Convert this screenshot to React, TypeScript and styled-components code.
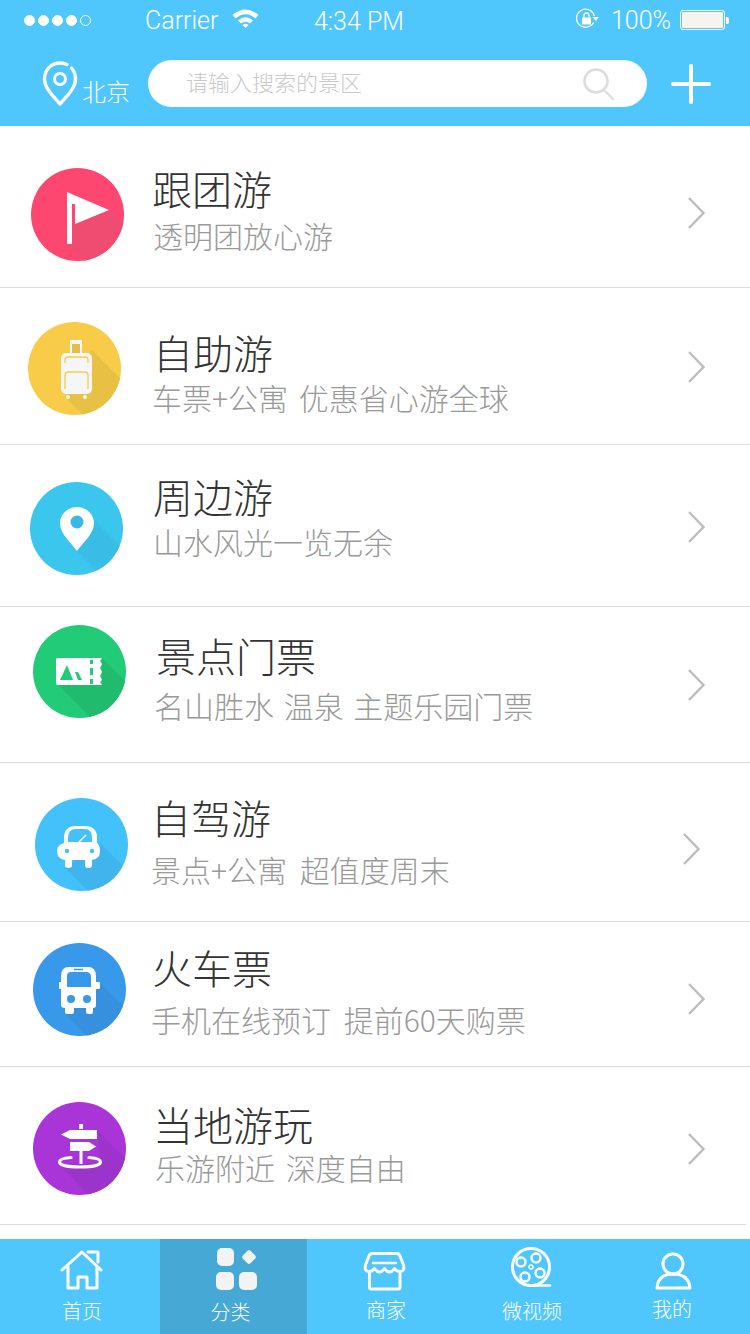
import React from 'react';
import styled, { createGlobalStyle } from 'styled-components';

const SKY = '#4fc7fd';
const FONT = '"Noto Sans CJK SC", "Liberation Sans", sans-serif';

const GlobalStyle = createGlobalStyle`
  html, body {
    margin: 0;
    padding: 0;
    background: #fff;
  }
  * {
    box-sizing: border-box;
  }
`;

const Page = styled.div`
  width: 750px;
  height: 1334px;
  overflow: hidden;
  display: flex;
  flex-direction: column;
  background: #fff;
  font-family: ${FONT};
`;

const Top = styled.header`
  height: 126px;
  flex: none;
  background: ${SKY};
  color: #fff;
`;

const StatusBar = styled.div`
  height: 40px;
  display: flex;
  align-items: center;
  padding-left: 24px;
  font-family: Roboto, 'Liberation Sans', sans-serif;
  font-weight: 300;
  font-size: 25px;
  color: #fff;
`;

const Dots = styled.div`
  display: flex;
  gap: 3px;
`;

const Dot = styled.span<{ $empty?: boolean }>`
  width: 11px;
  height: 11px;
  border-radius: 50%;
  border: 1px solid #fff;
  background: ${(p) => (p.$empty ? 'transparent' : '#fff')};
`;

const Carrier = styled.span`
  margin-left: 54px;
  width: 72px;
  white-space: nowrap;
`;

const Wifi = styled.svg`
  margin-left: 15px;
  margin-bottom: 4px;
`;

const Clock = styled.span`
  margin-left: 55px;
  margin-top: 3px;
  width: 90px;
  white-space: nowrap;
`;

const RotationLock = styled.svg`
  margin-left: 172px;
  margin-bottom: 2px;
`;

const Percent = styled.span`
  margin-left: 12px;
  width: 60px;
  white-space: nowrap;
`;

const Battery = styled.div`
  margin-left: 9px;
  width: 45px;
  height: 20px;
  border: 1px solid #fff;
  border-radius: 3px;
  padding: 1px;
  &::before {
    content: '';
    display: block;
    height: 100%;
    background: #f6f4ef;
    border-radius: 1px;
  }
`;

const BatteryCap = styled.div`
  width: 3px;
  height: 7px;
  margin-left: 1px;
  background: #fff;
  border-radius: 0 2px 2px 0;
`;

const SearchRow = styled.div`
  display: flex;
  align-items: flex-start;
  padding: 20px 0 0 41px;
`;

const City = styled.div`
  display: flex;
  align-items: flex-end;
  width: 107px;
  height: 47px;
  font-size: 24px;
  font-weight: 300;
  line-height: 28px;
  padding-bottom: 2px;
`;

const PinIcon = styled.svg`
  flex: none;
  margin-bottom: -2px;
`;

const SearchBox = styled.div`
  width: 499px;
  height: 47px;
  border-radius: 24px;
  background: #fff;
  display: flex;
  align-items: center;
  justify-content: space-between;
  padding: 0 32px 5px 38px;
  color: #c9c9c9;
  font-size: 22px;
  font-weight: 300;
`;

const SearchGlass = styled.svg`
  margin-top: 5px;
`;

const AddIcon = styled.svg`
  margin: 4px 0 0 24px;
`;

const List = styled.ul`
  list-style: none;
  margin: 0;
  padding: 0;
  flex: 1;
`;

const Row = styled.li<{ $height: number; $short?: boolean }>`
  height: ${(p) => p.$height}px;
  display: flex;
  align-items: flex-start;
  position: relative;
  border-bottom: 1px solid #dcdcdc;
  ${(p) => (p.$short ? 'width: 746px;' : '')}
`;

const Badge = styled.svg<{ $x: number; $y: number }>`
  flex: none;
  margin: ${(p) => p.$y}px 0 0 ${(p) => p.$x}px;
`;

const Copy = styled.div<{ $x: number; $y: number }>`
  position: absolute;
  left: ${(p) => p.$x}px;
  top: ${(p) => p.$y}px;
`;

const Title = styled.div`
  font-size: 40px;
  line-height: 46px;
  font-weight: 300;
  color: #333;
  white-space: nowrap;
`;

const Sub = styled.div<{ $gap: number; $x: number; $words: number }>`
  margin: ${(p) => p.$gap}px 0 0 ${(p) => p.$x}px;
  font-size: 30px;
  line-height: 40px;
  font-weight: 300;
  color: #999;
  white-space: nowrap;
  word-spacing: ${(p) => p.$words}px;
`;

const Chevron = styled.svg<{ $x: number; $y: number }>`
  position: absolute;
  left: ${(p) => p.$x}px;
  top: ${(p) => p.$y}px;
`;

const TabBar = styled.nav`
  height: 95px;
  flex: none;
  background: ${SKY};
  display: grid;
  grid-template-columns: 160px 147px 156px 138px 149px;
  color: #fff;
`;

const Tab = styled.div<{ $active?: boolean; $shift: number }>`
  display: flex;
  flex-direction: column;
  align-items: center;
  padding-top: 8px;
  background: ${(p) => (p.$active ? '#45a8d5' : 'transparent')};
  padding-left: ${(p) => Math.max(p.$shift, 0)}px;
  padding-right: ${(p) => Math.max(-p.$shift, 0)}px;
`;

const TabIcon = styled.svg`
  display: block;
  fill: none;
  stroke: #fff;
  stroke-width: 3;
  stroke-linecap: round;
  stroke-linejoin: round;
  overflow: visible;
`;

const TabLabel = styled.span<{ $top: number }>`
  margin-top: ${(p) => p.$top}px;
  font-size: 20px;
  line-height: 24px;
  font-weight: 300;
  white-space: nowrap;
`;

const WHITE = '#fff';

function CircleIcon({ id, x, y, base, shade, shadow, children }: {
  id: string;
  x: number;
  y: number;
  base: string;
  shade: string;
  shadow: string;
  children: React.ReactNode;
}) {
  return (
    <Badge $x={x} $y={y} width="93" height="93" viewBox="0 0 93 93">
      <clipPath id={id}>
        <circle cx="46.5" cy="46.5" r="46.5" />
      </clipPath>
      <circle cx="46.5" cy="46.5" r="46.5" fill={base} />
      <polygon points={shadow} fill={shade} clipPath={`url(#${id})`} />
      {children}
    </Badge>
  );
}

const rows = [
  {
    id: 'flag', title: '跟团游', sub: '透明团放心游', height: 162,
    ix: 31, iy: 42, tx: 152, ty: 42, gap: 4, sx: 1, words: 0, cx: 687, cy: 70,
    base: '#fd4770', shade: '#f04c71', shadow: '36,76 41,76 44,56 78,42 110,74 110,110 70,110',
    art: <path d="M36 24 L78 42 L44 56 V36 H41 V76 H36 Z" fill={WHITE} />,
  },
  {
    id: 'bag', title: '自助游', sub: '车票+公寓 优惠省心游全球', height: 157,
    ix: 28, iy: 34, tx: 153, ty: 44, gap: 2, sx: -1, words: 4, cx: 687, cy: 62,
    base: '#f8cb48', shade: '#e8c144', shadow: '64,28 100,64 100,110 72,110 38,76',
    art: (
      <g>
        <path d="M42 18 H54 V32 H52 V22 H44 V32 H42 Z" fill="#f5f6fa" />
        <rect x="44" y="22" width="8" height="9" fill="#e6bf42" />
        <rect x="33" y="31" width="31" height="41" rx="5" fill="#f5f6fa" />
        <path d="M37 41 V38 Q37 35 40 35 H57 Q60 35 60 38 V41" fill="none" stroke="#f8cb48" strokeWidth="1.3" />
        <path d="M37 67 V53 Q37 50 40 50 H57 Q60 50 60 53 V67" fill="none" stroke="#f8cb48" strokeWidth="1.3" />
        <circle cx="40" cy="75" r="2" fill="#f5f6fa" />
        <circle cx="57" cy="75" r="2" fill="#f5f6fa" />
      </g>
    ),
  },
  {
    id: 'pin', title: '周边游', sub: '山水风光一览无余', height: 162,
    ix: 30, iy: 37, tx: 153, ty: 31, gap: 2, sx: 0, words: 0, cx: 687, cy: 65,
    base: '#3bc6ee', shade: '#39bce5', shadow: '64,38 100,74 100,110 88,110 47,69',
    art: (
      <g>
        <path d="M47 69 C40 59 30 52 30 41 C30 32 38 25 47 25 C56 25 64 32 64 41 C64 52 54 59 47 69 Z" fill={WHITE} />
        <circle cx="47" cy="40" r="6.5" fill="#3bb9e4" />
      </g>
    ),
  },
  {
    id: 'ticket', title: '景点门票', sub: '名山胜水 温泉 主题乐园门票', height: 156,
    ix: 33, iy: 18, tx: 156, ty: 28, gap: 7, sx: -2, words: 3, cx: 687, cy: 61,
    base: '#22cc76', shade: '#20bb6d', shadow: '69,33 100,64 100,110 75,110 25,60 69,60',
    art: (
      <g>
        <path d="M25 33 H69 L67 36 L69 39 L67 43 L69 47 L67 51 L69 55 L67 57 L69 60 H25 Q23 60 23 58 V35 Q23 33 25 33 Z" fill={WHITE} />
        <path d="M27 55 L34 40 L40 55 Z M42 47 H45 L49 55 H45 Z" fill="#22cc76" />
        <path d="M58.5 35 V39 M58.5 43 V50 M58.5 54 V59" stroke="#22cc76" strokeWidth="3" />
      </g>
    ),
  },
  {
    id: 'car', title: '自驾游', sub: '景点+公寓 超值度周末', height: 159,
    ix: 35, iy: 35, tx: 151, ty: 34, gap: 9, sx: 0, words: 6, cx: 682, cy: 69,
    base: '#43c1fb', shade: '#41b4ee', shadow: '65,45 100,80 100,110 70,110 30,70',
    art: (
      <g>
        <path d="M29 45 V40 Q29 28 41 28 H50 Q62 28 62 40 V45 Q65 47 65 53 Q65 61 57 62 V67 Q57 70 54 70 H53 Q50 70 50 67 V62 H37 V67 Q37 70 34 70 H33 Q30 70 30 67 V62 Q22 61 22 53 Q22 47 29 45 Z" fill={WHITE} />
        <path d="M33 44 V40 Q33 31 41 31 H50 Q57 31 57 40 V44 Z" fill="#43c1fb" />
        <path d="M44 44 L51 37" stroke={WHITE} strokeWidth="1.5" />
        <circle cx="32" cy="53" r="2.2" fill="#43c1fb" />
        <circle cx="57" cy="53" r="2.2" fill="#43c1fb" />
      </g>
    ),
  },
  {
    id: 'bus', title: '火车票', sub: '手机在线预订 提前60天购票', height: 145,
    ix: 33, iy: 21, tx: 152, ty: 25, gap: 9, sx: -1, words: 6, cx: 687, cy: 60,
    base: '#3899ea', shade: '#3690dd', shadow: '66,39 100,73 100,110 71,110 32,71',
    art: (
      <g>
        <path d="M36 24 H55 Q63 24 63 33 V39 H66 Q67 39 67 40 V45 Q67 46 66 46 H63 V62 Q63 65 60 65 V69 Q60 71 58 71 H55 Q53 71 53 69 V65 H41 V69 Q41 71 39 71 H34 Q32 71 32 69 V65 Q28 65 28 62 V46 H27 Q26 46 26 45 V40 Q26 39 27 39 H28 V33 Q28 24 36 24 Z" fill={WHITE} />
        <path d="M38 29 H53 Q58 29 58 34 V44 H34 V33 Q34 29 38 29 Z" fill="#3899ea" />
        <path d="M41 26.5 H50" stroke="#3899ea" strokeWidth="1.5" />
        <circle cx="38" cy="56" r="4" fill="#3899ea" />
        <circle cx="54" cy="56" r="4" fill="#3899ea" />
      </g>
    ),
  },
  {
    id: 'sign', title: '当地游玩', sub: '乐游附近 深度自由', height: 158,
    ix: 33, iy: 35, tx: 153, ty: 37, gap: 0, sx: 2, words: 4, cx: 687, cy: 65,
    base: '#a934d8', shade: '#9c33ca', shadow: '64,28 100,64 100,110 72,110 28,64 67,60',
    short: true,
    art: (
      <g>
        <rect x="46" y="22" width="4" height="5" fill={WHITE} />
        <polygon points="28,32.5 37,28 64,28 64,37 37,37" fill={WHITE} />
        <polygon points="37,40 56,40 63,44.5 56,49 37,49" fill={WHITE} />
        <rect x="46.5" y="49" width="3" height="13" fill={WHITE} />
        <path d="M38 55.5 C30 56 26.5 57.5 26.5 60 C26.5 63.5 36 65 47 65 C58 65 67.5 63.5 67.5 60 C67.5 57.5 64 56 56 55.5" fill="none" stroke={WHITE} strokeWidth="3.2" strokeLinecap="round" />
      </g>
    ),
  },
];

const tabs = [
  {
    label: '首页', top: 8, shift: 4,
    icon: (
      <>
        <path d="M10 23 L30 5 L49 23" />
        <path d="M36 5 H46 V15" />
        <path d="M16 20 V41 H26 V30 H35 V41 H45 V20" />
      </>
    ),
  },
  {
    label: '分类', top: 9, shift: -6, active: true,
    icon: (
      <g fill="#f3f3f3" stroke="none">
        <rect x="16" y="1" width="17" height="18" rx="5" />
        <rect x="42.5" y="4.5" width="11" height="11" rx="2.5" transform="rotate(45 48 10)" />
        <rect x="15" y="25" width="18" height="18" rx="5" />
        <rect x="38" y="25" width="18" height="18" rx="5" />
      </g>
    ),
  },
  {
    label: '商家', top: 7, shift: 2,
    icon: (
      <>
        <path d="M16 6.5 H41 Q43 6.5 44 9 L47.5 18 Q49 24.5 44 24.5 Q40.5 24.5 38.5 21.5 Q36 25 33.5 25 Q31 25 28.5 21.5 Q26 25 23.5 25 Q21 25 18.5 21.5 Q16.5 24.5 13 24.5 Q8 24.5 9.5 18 L13 9 Q14 6.5 16 6.5 Z" />
        <path d="M13.5 27 V40 Q13.5 42 15.5 42 H42 Q44 42 44 40 V27" />
        <path d="M17 16 H40" strokeWidth="2.5" />
      </>
    ),
  },
  {
    label: '微视频', top: 8, shift: 0,
    icon: (
      <>
        <circle cx="29" cy="20" r="18.5" />
        <path d="M29 38.5 H48" strokeWidth="2.5" />
        <g strokeWidth="2.4">
          <circle cx="19" cy="15" r="4.5" />
          <circle cx="34" cy="11" r="4.5" />
          <circle cx="38" cy="26" r="4.5" />
          <circle cx="23" cy="30" r="4.5" />
          <circle cx="29" cy="20" r="2" strokeWidth="1.5" />
        </g>
      </>
    ),
  },
  {
    label: '我的', top: 6, shift: -7,
    icon: (
      <>
        <circle cx="31" cy="17" r="10" />
        <path d="M15 41 C16 29 24 27 31 27 C39 27 47 30 48 41 Z" />
      </>
    ),
  },
];

export default function App() {
  return (
    <Page>
      <GlobalStyle />
      <Top>
        <StatusBar>
          <Dots>
            <Dot />
            <Dot />
            <Dot />
            <Dot />
            <Dot $empty />
          </Dots>
          <Carrier>Carrier</Carrier>
          <Wifi width="27" height="19" viewBox="0 0 27 19">
            <path d="M0.5 6 Q13.5 -5 26.5 6 L23.5 9.5 Q13.5 1 3.5 9.5 Z" fill="#fff" />
            <path d="M6 11.5 Q13.5 5 21 11.5 L18 14.5 Q13.5 11 9 14.5 Z" fill="#fff" />
            <path d="M10.5 16 Q13.5 13.5 16.5 16 L13.5 19 Z" fill="#fff" />
          </Wifi>
          <Clock>4:34 PM</Clock>
          <RotationLock width="23" height="22" viewBox="0 0 23 22" fill="none">
            <path d="M17.5 14.5 A9 9 0 1 1 18.3 8" stroke="#fff" strokeWidth="1.3" />
            <path d="M16.5 9 H23 L19.8 13 Z" fill="#fff" />
            <rect x="6" y="9.5" width="9" height="7" fill="#fff" />
            <path d="M8 9.5 V7.5 A2.5 2.5 0 0 1 13 7.5 V9.5" stroke="#fff" strokeWidth="1.3" />
          </RotationLock>
          <Percent>100%</Percent>
          <Battery />
          <BatteryCap />
        </StatusBar>
        <SearchRow>
          <City>
            <PinIcon width="41" height="47" viewBox="0 0 41 47" fill="none" stroke="#fff">
              <path d="M30.5 8 C33 11 34.5 15 34.5 19 C34.5 28 26 36 19 44 C12 36 3.5 28 3.5 19 C3.5 10 10 3 19 3 C21.5 3 24 3.5 26 4.5" strokeWidth="3.4" strokeLinejoin="round" strokeLinecap="round" />
              <circle cx="19" cy="19" r="5.5" strokeWidth="3" />
            </PinIcon>
            北京
          </City>
          <SearchBox>
            <span>请输入搜索的景区</span>
            <SearchGlass width="32" height="32" viewBox="0 0 32 32" fill="none" stroke="#dcdcdc">
              <circle cx="13" cy="13" r="11.5" strokeWidth="2.6" />
              <path d="M21 22 L30 31" strokeWidth="2.2" strokeLinecap="round" />
            </SearchGlass>
          </SearchBox>
          <AddIcon width="40" height="40" viewBox="0 0 40 40" stroke="#fff" strokeWidth="4" strokeLinecap="round">
            <path d="M20 2 V38 M2 20 H38" />
          </AddIcon>
        </SearchRow>
      </Top>
      <List>
        {rows.map((r) => (
          <Row key={r.id} $height={r.height} $short={r.short}>
            <CircleIcon id={r.id} x={r.ix} y={r.iy} base={r.base} shade={r.shade} shadow={r.shadow}>
              {r.art}
            </CircleIcon>
            <Copy $x={r.tx} $y={r.ty - 3}>
              <Title>{r.title}</Title>
              <Sub $gap={r.gap} $x={r.sx} $words={r.words}>{r.sub}</Sub>
            </Copy>
            <Chevron $x={r.cx} $y={r.cy} width="20" height="34" viewBox="0 0 20 34" fill="none" stroke="#bcbcbc" strokeWidth="2.4">
              <path d="M2 2 L16.5 17 L2 32" />
            </Chevron>
          </Row>
        ))}
      </List>
      <TabBar>
        {tabs.map((t) => (
          <Tab key={t.label} $active={t.active} $shift={t.shift}>
            <TabIcon width="60" height="44" viewBox="0 0 60 44">
              {t.icon}
            </TabIcon>
            <TabLabel $top={t.top}>{t.label}</TabLabel>
          </Tab>
        ))}
      </TabBar>
    </Page>
  );
}
